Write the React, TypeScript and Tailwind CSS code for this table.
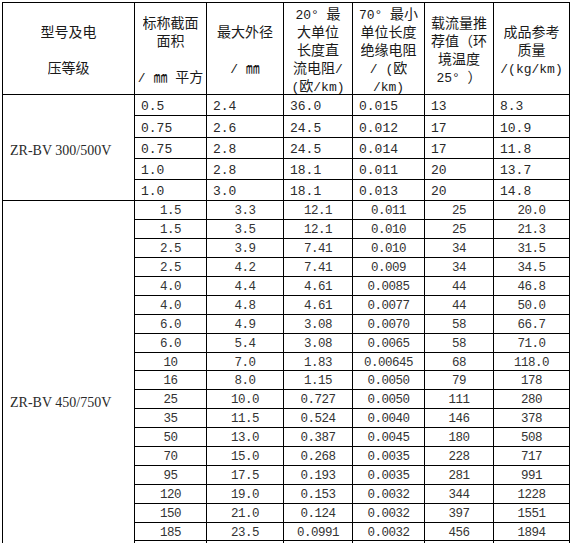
import React from "react";

const W = ["w-[131px]", "w-[71px]", "w-[76px]", "w-[68px]", "w-[71px]", "w-[68px]", "w-[75px]"];

const headers: string[][] = [
  ["型号及电", "", "压等级"],
  ["标称截面", "面积", "", "/ ㎜ 平方"],
  ["最大外径", "", "/ ㎜"],
  ["20° 最", "大单位", "长度直", "流电阻/", "(欧/km)"],
  ["70° 最小", "单位长度", "绝缘电阻", "/ (欧", "/km)"],
  ["载流量推", "荐值（环", "境温度", "25° ）"],
  ["成品参考", "质量", "/(kg/km)"],
];

const g1: string[][] = [
  ["0.5", "2.4", "36.0", "0.015", "13", "8.3"],
  ["0.75", "2.6", "24.5", "0.012", "17", "10.9"],
  ["0.75", "2.8", "24.5", "0.014", "17", "11.8"],
  ["1.0", "2.8", "18.1", "0.011", "20", "13.7"],
  ["1.0", "3.0", "18.1", "0.013", "20", "14.8"],
];
const g1h = ["h-[20px]", "h-[21px]", "h-[20px]", "h-[20px]", "h-[20px]"];

const g2: string[][] = [
  ["1.5", "3.3", "12.1", "0.011", "25", "20.0"],
  ["1.5", "3.5", "12.1", "0.010", "25", "21.3"],
  ["2.5", "3.9", "7.41", "0.010", "34", "31.5"],
  ["2.5", "4.2", "7.41", "0.009", "34", "34.5"],
  ["4.0", "4.4", "4.61", "0.0085", "44", "46.8"],
  ["4.0", "4.8", "4.61", "0.0077", "44", "50.0"],
  ["6.0", "4.9", "3.08", "0.0070", "58", "66.7"],
  ["6.0", "5.4", "3.08", "0.0065", "58", "71.0"],
  ["10", "7.0", "1.83", "0.00645", "68", "118.0"],
  ["16", "8.0", "1.15", "0.0050", "79", "178"],
  ["25", "10.0", "0.727", "0.0050", "111", "280"],
  ["35", "11.5", "0.524", "0.0040", "146", "378"],
  ["50", "13.0", "0.387", "0.0045", "180", "508"],
  ["70", "15.0", "0.268", "0.0035", "228", "717"],
  ["95", "17.5", "0.193", "0.0035", "281", "991"],
  ["120", "19.0", "0.153", "0.0032", "344", "1228"],
  ["150", "21.0", "0.124", "0.0032", "397", "1551"],
  ["185", "23.5", "0.0991", "0.0032", "456", "1894"],
  ["240", "26.4", "0.0754", "0.0032", "545", "2431"],
  ["300", "29.6", "0.0601", "0.0030", "635", "3033"],
  ["400", "33.2", "0.0470", "0.0028", "715", "3906"],
];
const g2h = [
  "h-[18px]", "h-[18px]", "h-[18px]", "h-[18px]", "h-[18px]", "h-[18px]", "h-[18px]", "h-[18px]",
  "h-[17px]", "h-[18px]", "h-[18px]", "h-[18px]", "h-[18px]", "h-[18px]", "h-[18px]", "h-[18px]",
  "h-[18px]", "h-[17px]", "h-[18px]", "h-[18px]", "h-[18px]",
];

const cjk = { fontFamily: '"Noto Sans CJK SC", "Noto Sans", sans-serif' };
const mono = { fontFamily: '"Liberation Mono", "Noto Sans CJK SC", monospace' };
const serif = { fontFamily: '"Liberation Serif", "Noto Sans CJK SC", serif' };

function HeaderLine({ text }: { text: string }) {
  const parts = text.split(/([\x20-\x7E°]+)/).filter((p) => p.length > 0);
  return (
    <div className="h-[18px] overflow-hidden whitespace-pre text-[14px] leading-[18px]">
      {parts.map((p, k) =>
        /^[\x20-\x7E°]+$/.test(p) ? (
          <span key={k} className="text-[13px]" style={mono}>
            {p}
          </span>
        ) : (
          <span key={k}>{p}</span>
        )
      )}
    </div>
  );
}

export default function App() {
  return (
    <div className="min-h-screen bg-white pl-[2px] pt-[2px]">
      <div className="flex w-[568px] flex-col gap-px border border-black bg-black">
        {/* header */}
        <div className="flex gap-px">
          {headers.map((lines, i) => (
            <div
              key={i}
              className={`${W[i]} flex h-[91px] flex-col items-center justify-center bg-white text-[#1a1a1a]`}
              style={cjk}
            >
              {lines.map((l, j) => (
                <HeaderLine key={j} text={l} />
              ))}
            </div>
          ))}
        </div>

        {/* group 1 */}
        <div className="flex gap-px">
          <div
            className={`${W[0]} flex items-center bg-white pl-[7px] pt-[5px] text-[14px] text-[#2a2a2a]`}
            style={serif}
          >
            ZR-BV 300/500V
          </div>
          <div className="flex flex-1 flex-col gap-px">
            {g1.map((row, r) => (
              <div key={r} className="flex gap-px">
                {row.map((v, c) => (
                  <div
                    key={c}
                    className={`${W[c + 1]} ${g1h[r]} flex items-center bg-white pl-[6px] pt-[3px] text-[13px] leading-none text-[#2a2a2a]`}
                    style={mono}
                  >
                    {v}
                  </div>
                ))}
              </div>
            ))}
          </div>
        </div>

        {/* group 2 */}
        <div className="flex gap-px">
          <div
            className={`${W[0]} flex items-center bg-white pl-[7px] pt-[7px] text-[14px] text-[#2a2a2a]`}
            style={serif}
          >
            ZR-BV 450/750V
          </div>
          <div className="flex flex-1 flex-col gap-px">
            {g2.map((row, r) => (
              <div key={r} className="flex gap-px">
                {row.map((v, c) => (
                  <div
                    key={c}
                    className={`${W[c + 1]} ${g2h[r]} flex items-center justify-center bg-white pt-[3px] text-[12.5px] leading-none tracking-[-0.5px] text-[#333333]`}
                    style={mono}
                  >
                    {v}
                  </div>
                ))}
              </div>
            ))}
          </div>
        </div>
      </div>
    </div>
  );
}
